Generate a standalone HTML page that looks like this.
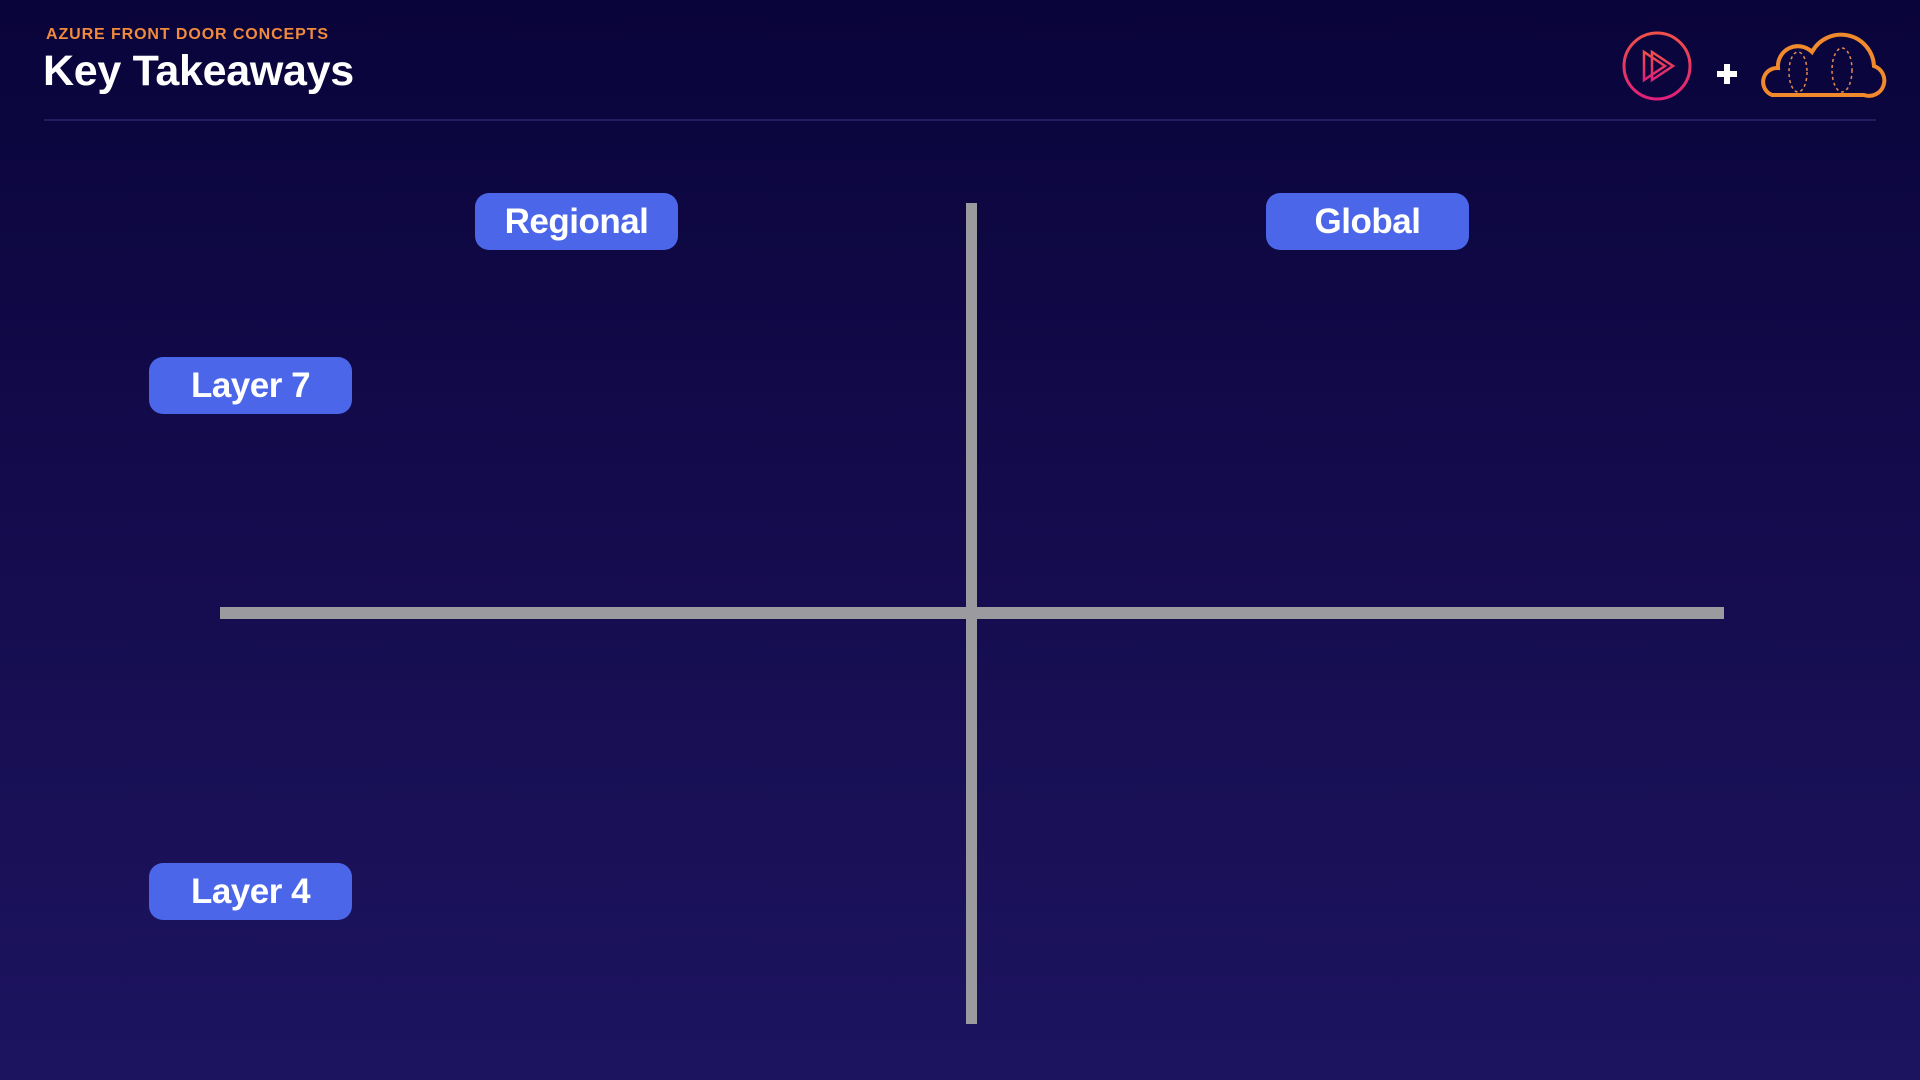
<!DOCTYPE html><html><head><style>
body{margin:0;width:1920px;height:1080px;overflow:hidden;background:linear-gradient(#09043a,#140b4c 45%,#1d1460);font-family:"Liberation Sans",sans-serif;position:relative}
.sub{position:absolute;left:46px;top:26px;color:#f08a3c;font-weight:bold;font-size:16px;letter-spacing:0.9px}
.t{position:absolute;left:43px;top:47px;color:#fff;font-weight:bold;font-size:43px;letter-spacing:-0.3px}
.hr{position:absolute;left:44px;top:119px;width:1832px;height:2px;background:#241b62}
.p{position:absolute;background:#4b66e8;border-radius:14px;color:#fff;font-weight:bold;font-size:35px;text-align:center;line-height:57px;height:57px;width:203px;letter-spacing:-0.5px}
.v{position:absolute;left:966px;top:203px;width:11px;height:821px;background:#9b9b9f}
.h{position:absolute;left:220px;top:607px;width:1504px;height:12px;background:#9b9b9f}
</style></head><body>
<div class="sub">AZURE FRONT DOOR CONCEPTS</div>
<div class="t">Key Takeaways</div>
<div class="hr"></div>
<svg style="position:absolute;left:1620px;top:28px" width="270" height="80">
<defs><linearGradient id="g" x1="0" y1="0" x2="0" y2="1"><stop offset="0" stop-color="#f0504a"/><stop offset="1" stop-color="#e0207a"/></linearGradient></defs>
<circle cx="37" cy="38" r="33" fill="none" stroke="url(#g)" stroke-width="3"/>
<path d="M24 24 L24 52 L45 38 Z M32 24 L32 52 L53 38 Z" fill="none" stroke="url(#g)" stroke-width="2.5"/>
<path d="M107 36 v20 M97 46 h20" stroke="#fff" stroke-width="6"/>
<path d="M152 67 h92 a15 15 0 0 0 10 -29 a33 33 0 0 0 -62 -14 a20 20 0 0 0 -34 16 a14 14 0 0 0 -6 27 z" fill="none" stroke="#f08a2c" stroke-width="4"/>
<ellipse cx="178" cy="44" rx="9" ry="20" fill="none" stroke="#e08a50" stroke-width="1.5" stroke-dasharray="3 3"/>
<ellipse cx="222" cy="42" rx="10" ry="22" fill="none" stroke="#e08a50" stroke-width="1.5" stroke-dasharray="3 3"/>
</svg>
<div class="v"></div><div class="h"></div>
<div class="p" style="left:475px;top:193px">Regional</div>
<div class="p" style="left:1266px;top:193px">Global</div>
<div class="p" style="left:149px;top:357px">Layer 7</div>
<div class="p" style="left:149px;top:863px">Layer 4</div>
</body></html>
